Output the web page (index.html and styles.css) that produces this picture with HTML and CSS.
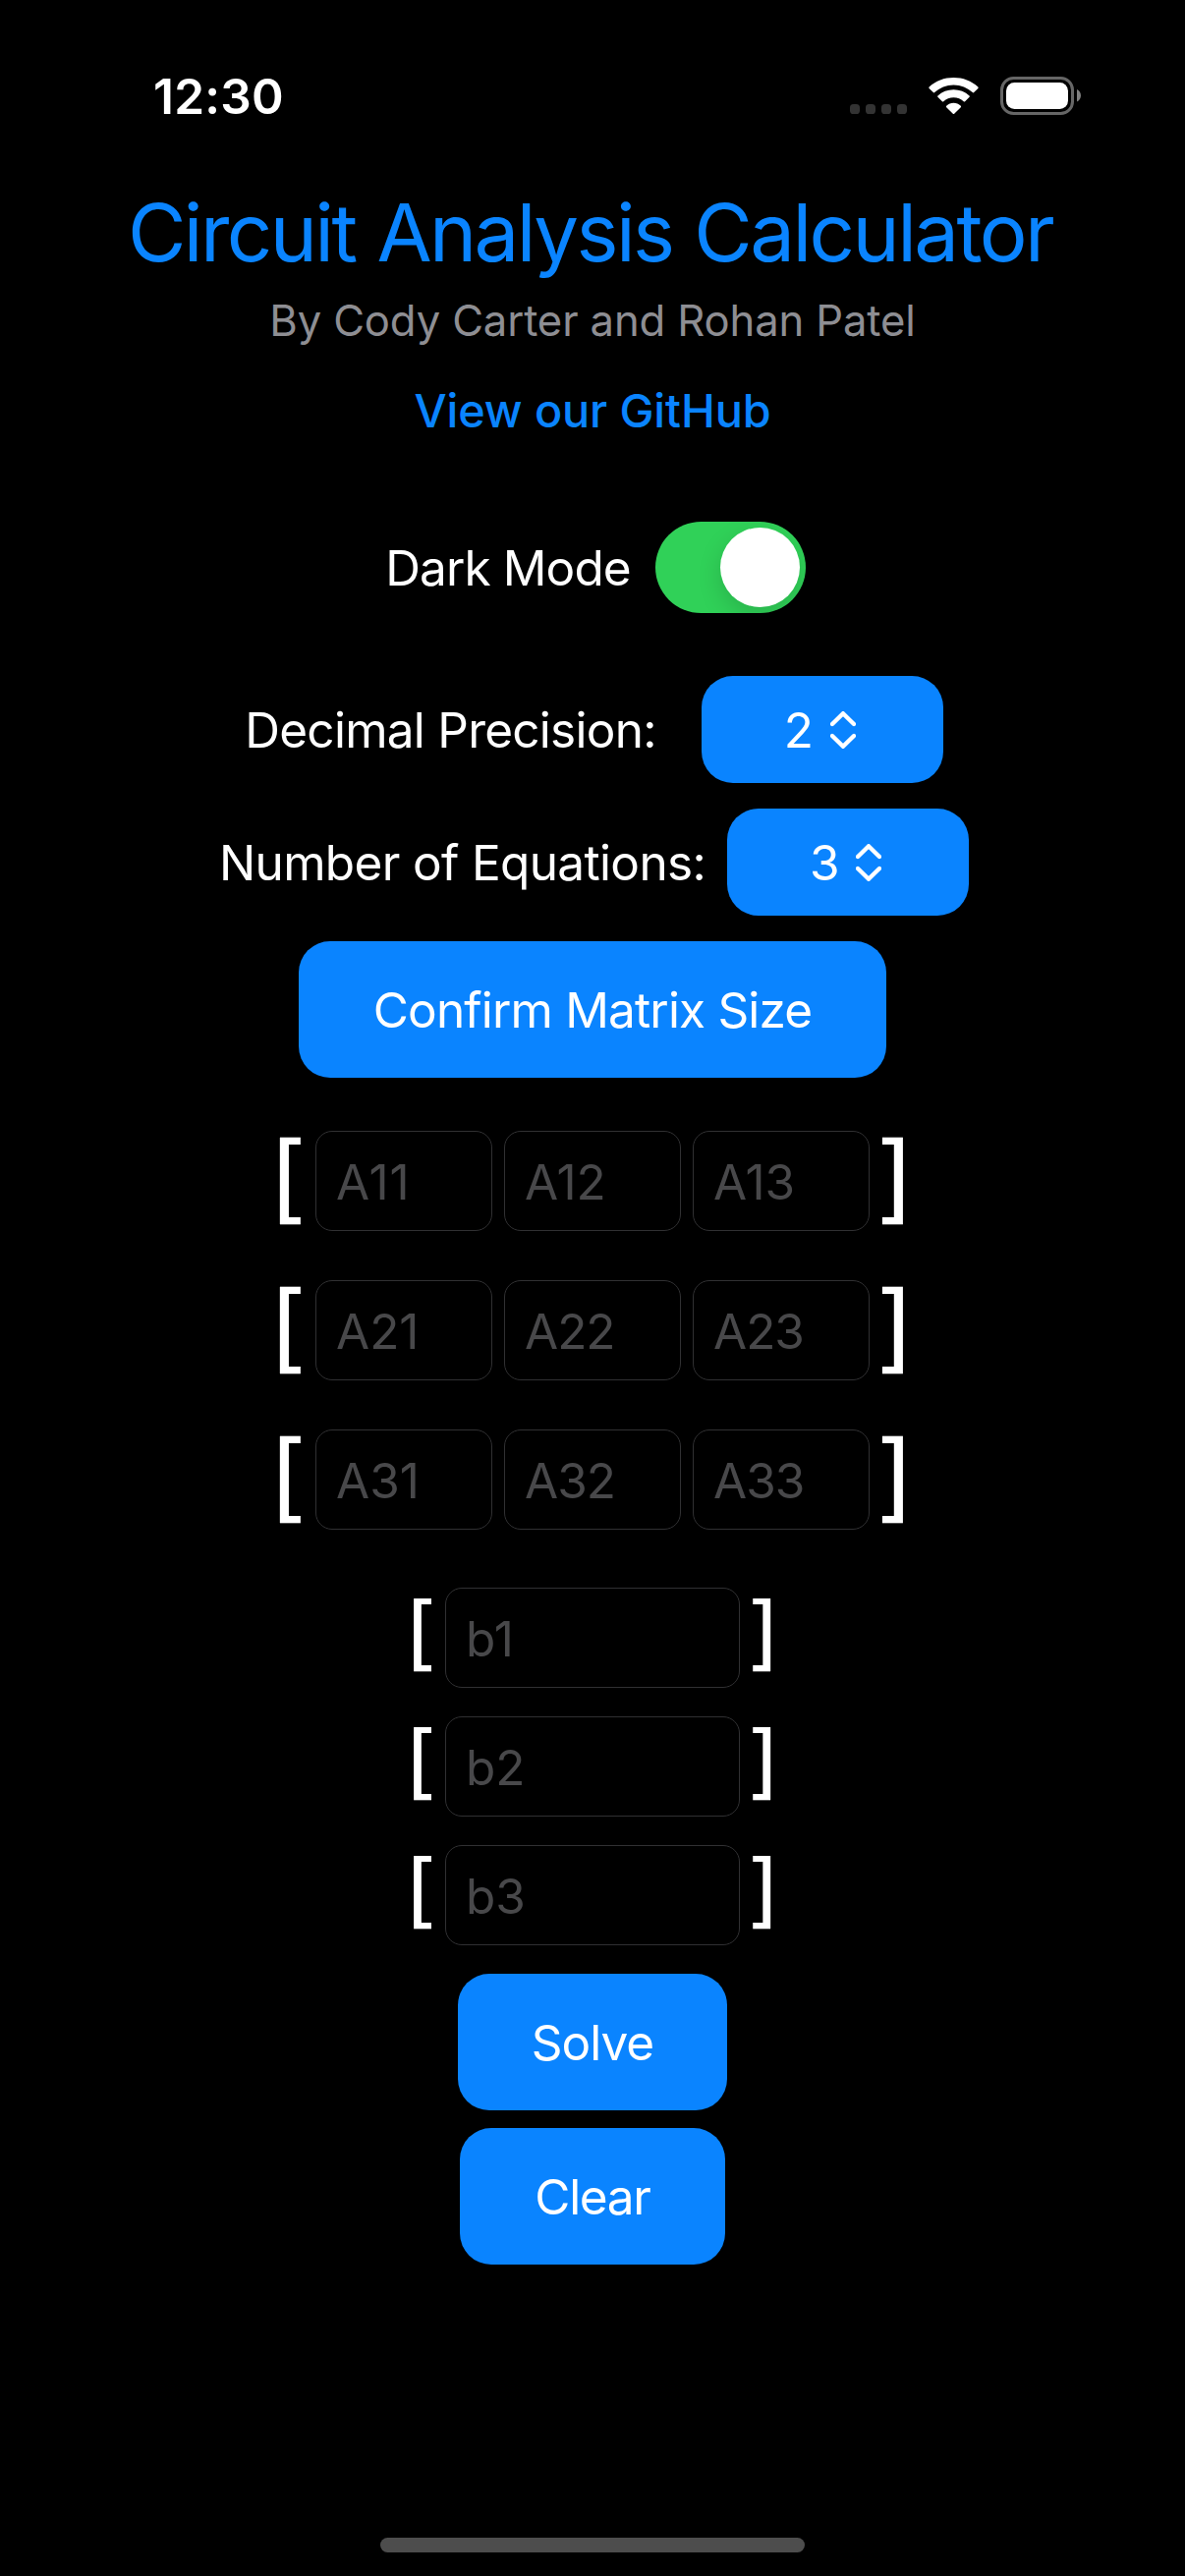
FILE: index.html
```
<!DOCTYPE html>
<html lang="en">
<head>
<meta charset="utf-8">
<title>Circuit Analysis Calculator</title>
<link rel="stylesheet" href="styles.css">
</head>
<body>
<div class="screen">
  <header class="status">
    <span class="status-time">12:30</span>
    <svg class="status-icons" width="236" height="52" viewBox="865 72 236 52" aria-hidden="true">
      <g fill="#333">
        <rect x="865" y="106" width="10" height="10" rx="3.6"/>
        <rect x="881" y="106" width="10" height="10" rx="3.6"/>
        <rect x="897" y="106" width="10" height="10" rx="3.6"/>
        <rect x="913" y="106" width="10" height="10" rx="3.6"/>
      </g>
      <g fill="#fff">
        <path d="M970.5 86.4c7.4 0 14.200 2.900 19.300 7.700.4.400 1 .4 1.400 0l4.200-4.200c.4-.4.4-1 0-1.400C988.700 82.300 980 79 970.500 79s-18.200 3.300-24.900 9.500c-.4.400-.4 1 0 1.400l4.200 4.200c.4.400 1 .4 1.400 0 5.100-4.800 11.900-7.700 19.300-7.700z"/>
        <path d="M970.500 99.300c3.900 0 7.500 1.500 10.200 3.900.4.400 1 .4 1.400 0l4.500-4.400c.4-.4.4-1 0-1.400-4.300-3.900-10-6.100-16.100-6.100s-11.800 2.200-16.100 6.100c-.4.400-.4 1 0 1.400l4.500 4.400c.4.400 1 .4 1.400 0 2.700-2.400 6.300-3.900 10.200-3.900z"/>
        <path d="M977.800 109.200c.4-.4.4-1.100 0-1.400-2-1.900-4.600-3-7.300-3s-5.300 1.100-7.300 3c-.4.300-.4 1 0 1.400l6.600 6.500c.4.400 1 .4 1.400 0z"/>
        <rect x="1024" y="84" width="63" height="27" rx="8.500"/>
      </g>
      <rect x="1019.500" y="79.500" width="72" height="36" rx="12" fill="none" stroke="#666" stroke-width="3"/>
      <path d="M1096 91c2.400 1 4 3.400 4 6.200s-1.600 5.200-4 6.200z" fill="#808080"/>
    </svg>
  </header>

  <main class="app">
    <h1 class="title">Circuit Analysis Calculator</h1>
    <p class="byline">By Cody Carter and Rohan Patel</p>
    <a class="repo-link" href="#">View our GitHub</a>

    <div class="row row-theme">
      <span class="label label-theme">Dark Mode</span>
      <span class="toggle" role="switch" aria-checked="true"><span class="knob"></span></span>
    </div>

    <div class="row row-precision">
      <span class="label label-precision">Decimal Precision:</span>
      <button class="picker"><span class="picker-value">2</span><svg width="26" height="38" viewBox="0 0 26 38"><path d="M2 13 13 2.200 24 13M2 25 13 35.800 24 25"/></svg></button>
    </div>
    <div class="row row-count">
      <span class="label label-count">Number of Equations:</span>
      <button class="picker"><span class="picker-value">3</span><svg width="26" height="38" viewBox="0 0 26 38"><path d="M2 13 13 2.200 24 13M2 25 13 35.800 24 25"/></svg></button>
    </div>

    <button class="button button-confirm">Confirm Matrix Size</button>

    <section class="matrix">
      <div class="matrix-row"><span class="bracket open">[</span><div class="cells"><div class="field loose">A11</div><div class="field">A12</div><div class="field">A13</div></div><span class="bracket close">]</span></div>
      <div class="matrix-row"><span class="bracket open">[</span><div class="cells"><div class="field">A21</div><div class="field snug">A22</div><div class="field snug">A23</div></div><span class="bracket close">]</span></div>
      <div class="matrix-row"><span class="bracket open">[</span><div class="cells"><div class="field">A31</div><div class="field snug">A32</div><div class="field snug">A33</div></div><span class="bracket close">]</span></div>
    </section>

    <section class="vector">
      <div class="vector-row"><span class="bracket open">[</span><div class="field">b1</div><span class="bracket close">]</span></div>
      <div class="vector-row"><span class="bracket open">[</span><div class="field">b2</div><span class="bracket close">]</span></div>
      <div class="vector-row"><span class="bracket open">[</span><div class="field">b3</div><span class="bracket close">]</span></div>
    </section>

    <button class="button button-solve">Solve</button>
    <button class="button button-clear">Clear</button>
  </main>

  <div class="home-indicator"></div>
</div>
</body>
</html>
```
FILE: styles.css
```
* {
  box-sizing: border-box;
}

body {
  margin: 0;
  background: #000;
  color: #fff;
  font: 400 49.5px/60px Inter, "Liberation Sans", sans-serif;
}

.screen {
  display: flex;
  flex-direction: column;
  width: 1206px;
  height: 2622px;
  padding-bottom: 24px;
  overflow: hidden;
}

.status {
  display: flex;
  justify-content: space-between;
  height: 187px;
  padding: 72px 105px 0 156px;
}

.status-time {
  margin-top: -4px;
  font-weight: 600;
  letter-spacing: 0.24px;
}

.status-icons {
  flex: none;
}

.app {
  display: flex;
  flex: 1;
  flex-direction: column;
  align-items: center;
}

.title {
  margin: 0 5px 0 0;
  font-size: 81.5px;
  font-weight: 400;
  line-height: 100px;
  letter-spacing: -2.6px;
  word-spacing: 1.6px;
  white-space: nowrap;
  color: #0a84ff;
}

.byline {
  margin: 10px 0 0;
  font-size: 43.6px;
  letter-spacing: -0.13px;
  white-space: nowrap;
  color: #8e8e93;
}

.repo-link {
  margin-top: 31px;
  font-size: 46.8px;
  font-weight: 500;
  letter-spacing: -0.1px;
  text-decoration: none;
  white-space: nowrap;
  color: #0a84ff;
}

.row {
  display: flex;
  align-items: center;
  white-space: nowrap;
}

.row-theme {
  gap: 25px;
  margin-top: 83px;
  padding-left: 6px;
}

.row-precision {
  gap: 46px;
  margin-top: 64px;
  padding-left: 3px;
}

.row-count {
  gap: 22px;
  margin-top: 26px;
  padding-left: 3px;
}

.label-theme {
  letter-spacing: -0.88px;
}

.label-precision {
  letter-spacing: -0.74px;
}

.label-count {
  letter-spacing: -0.65px;
}

.toggle {
  display: flex;
  justify-content: flex-end;
  width: 153px;
  height: 93px;
  padding: 6px;
  border-radius: 47px;
  background: #30d158;
  overflow: hidden;
}

.knob {
  width: 81px;
  height: 81px;
  border-radius: 50%;
  background: #fff;
  box-shadow: 0 9px 24px rgba(0, 0, 0, 0.15);
}

.picker,
.button {
  display: flex;
  align-items: center;
  border: 0;
  border-radius: 32px;
  background: #0a84ff;
  color: #fff;
  font: inherit;
}

.picker {
  gap: 17px;
  width: 246px;
  height: 109px;
  padding: 0 0 0 84px;
}

.picker-value {
  width: 30px;
}

.picker svg {
  fill: none;
  stroke: #fff;
  stroke-width: 4.4;
  stroke-linecap: round;
  stroke-linejoin: round;
}

.button {
  justify-content: center;
  height: 139px;
  padding: 0;
  white-space: nowrap;
}

.button-confirm {
  width: 598px;
  margin-top: 26px;
  letter-spacing: -0.83px;
}

.button-solve {
  width: 274px;
  margin-top: 29px;
  letter-spacing: -1px;
}

.button-clear {
  width: 270px;
  margin-top: 18px;
  letter-spacing: -1.3px;
}

.matrix {
  display: grid;
  gap: 50px;
  margin-top: 54px;
}

.vector {
  display: grid;
  gap: 29px;
  margin-top: 59px;
}

.matrix-row,
.vector-row {
  display: flex;
  align-items: center;
  height: 102px;
}

.cells {
  display: flex;
  gap: 12px;
}

.field {
  width: 180px;
  height: 102px;
  padding: 21px 0 0 20px;
  border: 1px solid #303032;
  border-radius: 17px;
  color: #48484a;
}

.field.snug {
  letter-spacing: -1px;
}

.field.loose {
  letter-spacing: 0.9px;
}

.vector .field {
  width: 300px;
}

.bracket {
  transform-origin: left;
  white-space: nowrap;
}

.matrix .bracket {
  width: 37px;
  padding-bottom: 8px;
  font-size: 98px;
  transform: scaleX(1.1);
}

.vector .bracket {
  width: 33px;
  padding-bottom: 12px;
  font-size: 82px;
  transform: scaleX(1.12);
}

.matrix .open {
  text-indent: -10px;
}

.matrix .close {
  text-indent: 6px;
}

.vector .open {
  text-indent: -8px;
}

.vector .close {
  text-indent: 7px;
}

.home-indicator {
  width: 432px;
  height: 15px;
  margin: 0 auto;
  border-radius: 8px;
  background: #4d4d4d;
}
```
